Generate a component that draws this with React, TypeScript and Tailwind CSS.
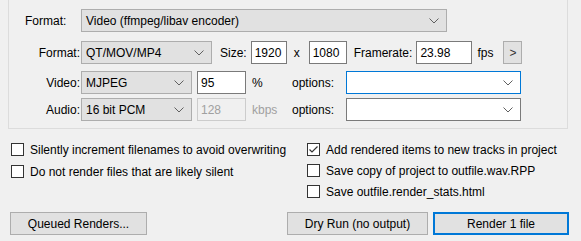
import React from "react";

const Chevron = () => (
  <svg width="10" height="6" viewBox="0 0 10 6" className="shrink-0">
    <path d="M0.5 0.5 L5 5 L9.5 0.5" fill="none" stroke="#606060" strokeWidth="1" />
  </svg>
);

function Combo({ w, text, gray = true, focused = false }: { w: string; text: string; gray?: boolean; focused?: boolean }) {
  const base = gray
    ? "bg-[#e1e1e1] border-[#adadad]"
    : focused
    ? "bg-white border-[#0078d7]"
    : "bg-white border-[#7a7a7a]";
  return (
    <div className={`${w} h-[23px] border ${base} flex items-center pl-[4px] pr-[7px] justify-between`}>
      <span>{text}</span>
      <Chevron />
    </div>
  );
}

function Input({ w, text, disabled = false }: { w: string; text: string; disabled?: boolean }) {
  return (
    <div
      className={`${w} h-[23px] border flex items-center pl-[3px] ${
        disabled ? "border-[#cccccc] bg-[#f0f0f0] text-[#a0a0a0]" : "border-[#7a7a7a] bg-white"
      }`}
    >
      {text}
    </div>
  );
}

function Check({ label, checked = false }: { label: string; checked?: boolean }) {
  return (
    <div className="flex items-center h-[13px]">
      <div className="w-[13px] h-[13px] border border-[#333333] bg-white flex items-center justify-center shrink-0">
        {checked && (
          <svg width="11" height="11" viewBox="0 0 11 11">
            <path d="M1.5 5.5 L4 8 L9.5 2.5" fill="none" stroke="#333333" strokeWidth="1.2" />
          </svg>
        )}
      </div>
      <span className="ml-[6px] whitespace-nowrap">{label}</span>
    </div>
  );
}

function Button({ w, label, def = false }: { w: string; label: string; def?: boolean }) {
  return (
    <div
      className={`${w} h-[23px] flex items-center justify-center bg-[#e1e1e1] border ${
        def ? "border-[#0078d7] shadow-[inset_0_0_0_1px_#0078d7]" : "border-[#adadad]"
      }`}
    >
      {label}
    </div>
  );
}

export default function App() {
  return (
    <div
      className="w-[581px] h-[241px] bg-[#f0f0f0] text-[#000000] text-[12px] leading-none overflow-hidden relative"
      style={{ fontFamily: '"Liberation Sans", Arial, sans-serif' }}
    >
      {/* group box */}
      <div className="ml-[8px] w-[560px] h-[129px] border border-t-0 border-[#dcdcdc] flex flex-col">
        {/* row 1 */}
        <div className="flex items-center mt-[9px]">
          <span className="ml-[16px] w-[56px]">Format:</span>
          <Combo w="w-[366px]" text="Video (ffmpeg/libav encoder)" />
        </div>
        {/* row 2 */}
        <div className="flex items-center mt-[9px]">
          <span className="w-[72px] text-right pr-[1px]">Format:</span>
          <Combo w="w-[131px]" text="QT/MOV/MP4" />
          <span className="ml-[8px]">Size:</span>
          <div className="ml-[4px]">
            <Input w="w-[36px]" text="1920" />
          </div>
          <span className="ml-[7px]">x</span>
          <div className="ml-[9px]">
            <Input w="w-[38px]" text="1080" />
          </div>
          <span className="ml-[7px]">Framerate:</span>
          <div className="ml-[4px]">
            <Input w="w-[56px]" text="23.98" />
          </div>
          <span className="ml-[5px]">fps</span>
          <div className="ml-[10px] w-[19px] h-[23px] bg-[#e1e1e1] border border-[#adadad] flex items-center justify-center text-[#333]">
            &gt;
          </div>
        </div>
        {/* row 3 */}
        <div className="flex items-center mt-[7px]">
          <span className="w-[72px] text-right pr-[1px]">Video:</span>
          <Combo w="w-[111px]" text="MJPEG" />
          <div className="ml-[5px]">
            <Input w="w-[49px]" text="95" />
          </div>
          <span className="ml-[6px] w-[40px]">%</span>
          <span className="ml-[0px]">options:</span>
          <div className="ml-[12px]">
            <Combo w="w-[175px]" text="" gray={false} focused />
          </div>
        </div>
        {/* row 4 */}
        <div className="flex items-center mt-[4px]">
          <span className="w-[72px] text-right pr-[1px]">Audio:</span>
          <Combo w="w-[111px]" text="16 bit PCM" />
          <div className="ml-[5px]">
            <Input w="w-[49px]" text="128" disabled />
          </div>
          <span className="ml-[6px] w-[40px] text-[#a0a0a0]">kbps</span>
          <span className="ml-[0px]">options:</span>
          <div className="ml-[12px]">
            <Combo w="w-[175px]" text="" gray={false} />
          </div>
        </div>
      </div>

      {/* checkboxes */}
      <div className="flex mt-[14px]">
        <div className="ml-[11px] w-[296px] flex flex-col gap-[9px]">
          <Check label="Silently increment filenames to avoid overwriting" />
          <Check label="Do not render files that are likely silent" />
        </div>
        <div className="flex flex-col gap-[8px]">
          <Check label="Add rendered items to new tracks in project" checked />
          <Check label="Save copy of project to outfile.wav.RPP" />
          <Check label="Save outfile.render_stats.html" />
        </div>
      </div>

      {/* buttons */}
      <div className="flex mt-[14px]">
        <div className="ml-[10px]">
          <Button w="w-[137px]" label="Queued Renders..." />
        </div>
        <div className="ml-[140px]">
          <Button w="w-[141px]" label="Dry Run (no output)" />
        </div>
        <div className="ml-[5px]">
          <Button w="w-[136px]" label="Render 1 file" def />
        </div>
      </div>
    </div>
  );
}
